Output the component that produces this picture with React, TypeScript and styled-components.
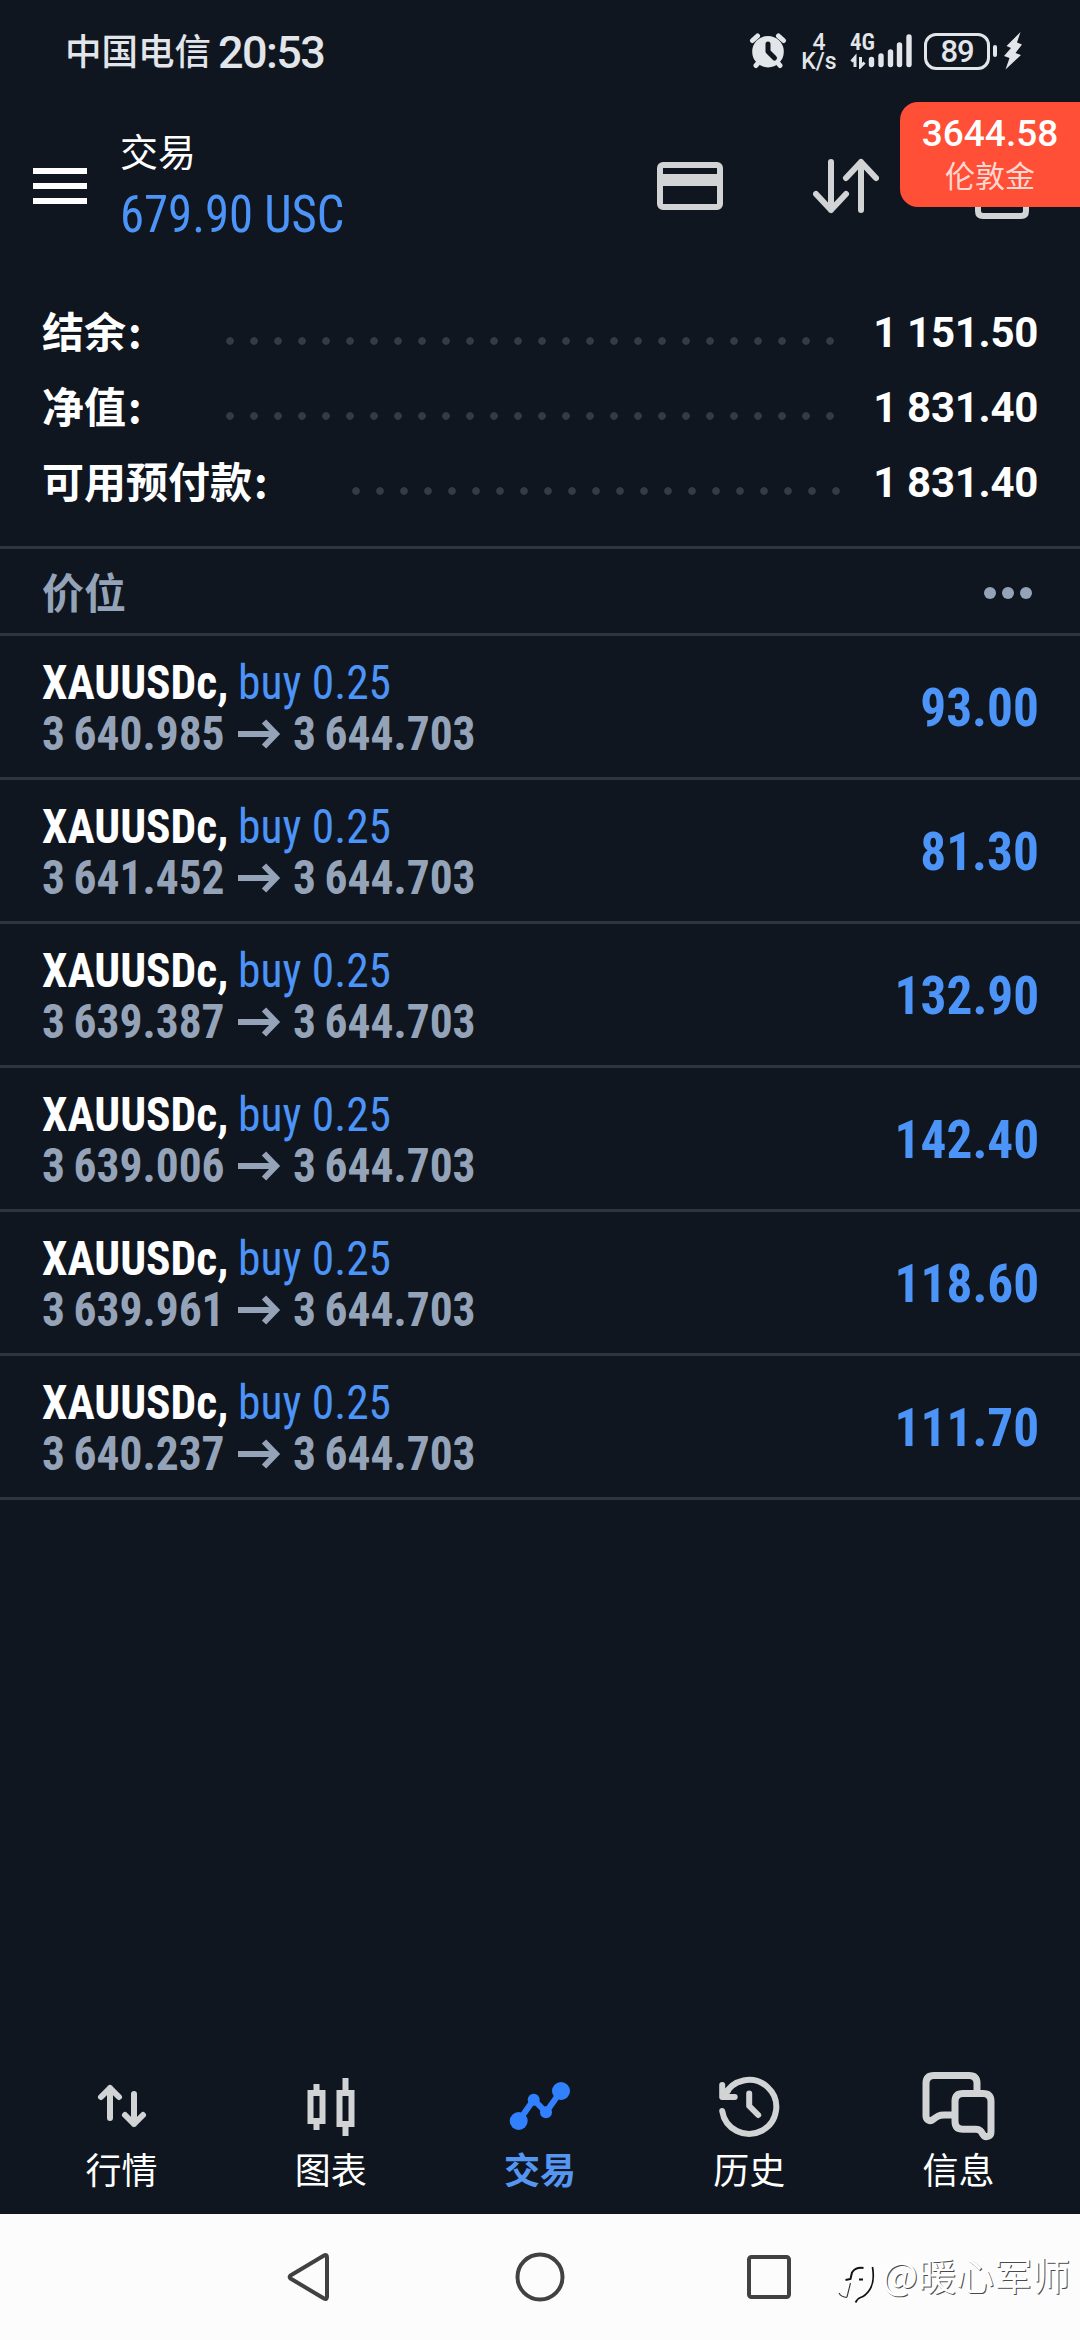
import React from "react";
import styled, { createGlobalStyle } from "styled-components";

const sans = `Roboto, "Noto Sans CJK SC", sans-serif`;
const condensed = `"Roboto Condensed", Roboto, sans-serif`;
const cjk = `"Noto Sans CJK SC", sans-serif`;

const color = {
  bg: "#0f161f",
  line: "#2d3640",
  blue: "#4c94f8",
  active: "#3080ff",
  muted: "#94a3b8",
  icon: "#d2d3d4",
  status: "#e2e5e9",
};

const GlobalStyle = createGlobalStyle`
  body { margin: 0; background: ${color.bg}; }
  * { box-sizing: border-box; }
  svg { display: block; flex: none; }
`;

const Screen = styled.div`
  position: relative;
  display: flex;
  flex-direction: column;
  width: 1080px;
  height: 2340px;
  overflow: hidden;
  background: ${color.bg};
  color: #fff;
  font-family: ${sans};
  white-space: nowrap;
`;

const StatusBar = styled.div`
  display: flex;
  align-items: center;
  height: 102px;
  padding: 0 57px 0 65px;
  color: ${color.status};
`;
const Carrier = styled.span`
  font: 500 36.5px/50px ${cjk};
  width: 153px;
  margin-top: -2px;
`;
const Clock = styled.span`
  font: 500 45px/50px ${sans};
  letter-spacing: -1.6px;
  margin-top: 3px;
`;
const StatusIcons = styled.div`
  display: flex;
  align-items: center;
  margin-left: auto;
`;
const NetSpeed = styled.div`
  display: flex;
  flex-direction: column;
  align-items: center;
  width: 34px;
  margin: 2px 13px 0 15px;
  font: 500 23px/19px ${sans};
`;
const Signal = styled.div`
  display: flex;
  position: relative;
  width: 64px;
  height: 36px;
`;
const NetType = styled.span`
  position: absolute;
  left: 1px;
  top: -1px;
  font: 600 23px/21px ${condensed};
`;
const Battery = styled.div`
  display: flex;
  align-items: center;
  justify-content: center;
  width: 66px;
  height: 37px;
  margin: 0 3px 0 11px;
  border: 3px solid ${color.status};
  border-radius: 12px;
  font: 500 31px/31px ${sans};
  letter-spacing: -1px;
`;
const BatteryTip = styled.div`
  width: 4px;
  height: 12px;
  margin-right: 7px;
  border-radius: 2px;
  background: ${color.status};
`;

const Header = styled.header`
  display: flex;
  align-items: center;
  height: 168px;
  padding: 0 45px 0 33px;
`;
const MenuButton = styled.div`
  display: flex;
  flex-direction: column;
  gap: 9px;
  width: 54px;
  margin-right: 33px;
`;
const MenuBar = styled.div`
  height: 6px;
  background: #fff;
`;
const HeaderText = styled.div`
  display: flex;
  flex-direction: column;
  gap: 5px;
  margin-top: -8px;
`;
const Title = styled.div`
  font: 400 38px/60px ${cjk};
`;
const Equity = styled.div`
  width: 230px;
  font: 400 51px/60px ${condensed};
  color: ${color.blue};
  transform: scaleX(0.955);
  transform-origin: left;
`;
const Actions = styled.div`
  display: flex;
  gap: 90px;
  margin-left: auto;
`;

const QuoteBadge = styled.div`
  position: absolute;
  right: 0;
  top: 102px;
  width: 180px;
  height: 105px;
  padding: 9px 0 0;
  border-radius: 18px 0 0 18px;
  background: #ff4f37;
  text-align: center;
`;
const QuotePrice = styled.div`
  font: 500 37px/46px ${sans};
`;
const QuoteName = styled.div`
  margin-top: -3px;
  font: 400 30px/40px ${cjk};
  color: #ffd8d2;
`;

const Summary = styled.section`
  display: flex;
  flex-direction: column;
  height: 276px;
  padding: 25px 42px 0;
`;
const SummaryRow = styled.div`
  display: flex;
  align-items: center;
  height: 75px;
`;
const SummaryLabel = styled.span`
  margin-top: -5px;
  font: 700 42px/60px ${cjk};
  &::after {
    content: ":";
    margin-left: 2px;
  }
`;
const Leader = styled.div<{ $count: number; $end: number }>`
  width: ${p => p.$count * 24}px;
  height: 8px;
  margin: 17px ${p => p.$end}px 0 auto;
  background: radial-gradient(circle at 12px 4px, #333c46 3.4px, transparent 4.2px) 0 0 / 24px 8px;
`;
const SummaryValue = styled.span`
  width: 166px;
  margin-top: 1px;
  text-align: right;
  font: 700 42px/60px ${sans};
  letter-spacing: -0.3px;
`;

const SectionHead = styled.div`
  display: flex;
  align-items: center;
  justify-content: space-between;
  height: 90px;
  padding: 0 48px 0 42px;
  border: solid ${color.line};
  border-width: 3px 0;
  color: ${color.muted};
  font: 700 42px/60px ${cjk};
`;
const SectionTitle = styled.span`
  margin-top: -1px;
`;
const More = styled.div`
  display: flex;
  gap: 6px;
  margin-top: 4px;
`;
const MoreDot = styled.i`
  width: 12px;
  height: 12px;
  border-radius: 50%;
  background: ${color.muted};
`;

const Position = styled.div`
  display: flex;
  justify-content: space-between;
  height: 144px;
  padding: 21px 41px 0 42px;
  border-bottom: 3px solid ${color.line};
`;
const Line = styled.div`
  display: flex;
  align-items: center;
  height: 51px;
  font: 700 48px/51px ${condensed};
`;
const Narrow = styled.span<{ $width: number }>`
  width: ${p => p.$width}px;
  transform: scaleX(0.947);
  transform-origin: left;
`;
const Symbol = styled(Narrow)``;
const Side = styled(Narrow)`
  font-weight: 400;
  color: ${color.blue};
`;
const Price = styled(Narrow)`
  color: ${color.muted};
  word-spacing: -2px;
`;
const ArrowSvg = styled.svg`
  margin: 1px 12px 0 12px;
`;
const Profit = styled.div`
  font: 700 54px/102px ${condensed};
  color: ${color.blue};
  transform: scaleX(0.95);
  transform-origin: right;
`;

const Spacer = styled.div`
  flex: 1;
`;

const Tabs = styled.nav`
  display: flex;
  height: 154px;
  padding: 10px 17px 0;
`;
const Tab = styled.div`
  display: flex;
  flex: 1;
  flex-direction: column;
  align-items: center;
`;
const TabLabel = styled.span<{ $active?: boolean }>`
  margin-top: -2px;
  font: ${p => (p.$active ? 700 : 400)} 36px/56px ${cjk};
  color: ${p => (p.$active ? "#5596f2" : "#fff")};
`;

const SystemNav = styled.div`
  position: relative;
  display: flex;
  align-items: center;
  justify-content: center;
  gap: 180px;
  height: 126px;
  background: #fcfcfc;
`;
const Watermark = styled.div`
  position: absolute;
  right: 10px;
  top: 32px;
  display: flex;
  align-items: flex-start;
  gap: 6px;
  color: #fff;
  font: 400 38px/56px ${cjk};
  text-shadow: 1px 1px 0 #4a4a4a;
`;
const LogoSvg = styled.svg`
  margin-top: 16px;
`;

const stroke6 = { fill: "none", stroke: color.icon, strokeWidth: 6, strokeLinecap: "round", strokeLinejoin: "round" } as const;
const navStroke = { fill: "none", stroke: "#414141", strokeWidth: 4, strokeLinejoin: "round" } as const;

const Alarm = () => (
  <svg width="38" height="38" viewBox="749 33 38 38" fill="none" stroke={color.status} strokeWidth="5" strokeLinecap="round">
    <circle cx="768" cy="52.7" r="15.8" fill={color.status} stroke="none" />
    <path d="M752.5 41.5l5-4.5M783.5 41.5l-5-4.5M756 66.5l4-5M780 66.5l-4-5" />
    <path d="M768 45v7.5l6.5 6.5" stroke={color.bg} strokeLinejoin="round" />
  </svg>
);

const SignalBars = () => (
  <svg width="64" height="36" viewBox="849 33 64 36" fill="none" stroke={color.status}>
    <path d="M871.5 59.500v5M881 56v8.500M890.500 52v12.500M899.500 45v19.500M909 37v27.500" strokeWidth="5.4" strokeLinecap="round" />
    <path d="M855 67v-9.500l-3.500 4M860.500 57v9.500l4-4" strokeWidth="3" />
  </svg>
);

const Bolt = () => (
  <svg width="19" height="38" viewBox="1003 32 19 38" fill={color.status}>
    <path d="M1019.500 32L1005.500 46l4.500 2-7 8 5.500 2-4 11.500L1020 55l-5.500-2 6.500-8.500-5-2z" />
  </svg>
);

const Card = () => (
  <svg width="66" height="66" viewBox="657 153 66 66">
    <rect x="660" y="165" width="60" height="42" rx="3" {...stroke6} />
    <path d="M660 174h60v12h-60z" fill={color.icon} />
  </svg>
);

const Sort = () => (
  <svg width="66" height="66" viewBox="813 153 66 66" {...stroke6}>
    <path d="M831 162v48M816 194l15 16 15-16M861 210v-48M846 178l15-16 15 16" />
  </svg>
);

const NewOrder = () => (
  <svg width="66" height="66" viewBox="969 153 66 66" {...stroke6}>
    <path d="M978 160h48v51q0 5-5 5h-38q-5 0-5-5z" />
  </svg>
);

const PriceArrow = () => (
  <ArrowSvg width="44" height="30" viewBox="0 0 44 30" fill="none" stroke={color.muted} strokeWidth="6">
    <path d="M1 15h38M27 2.500l12 12.500-12 12.500" />
  </ArrowSvg>
);

const QuotesIcon = () => (
  <svg width="72" height="72" viewBox="86 2070 72 72" {...stroke6}>
    <path d="M110 2118v-30M101 2097l9-9 9 9M134 2094v30M125 2115l9 9 9-9" />
  </svg>
);

const ChartIcon = () => (
  <svg width="72" height="72" viewBox="295 2070 72 72" fill="none" stroke={color.icon} strokeWidth="6">
    <path d="M310.500 2093h12v28h-12zM316.500 2084v7M316.500 2122v8M339.500 2093h12v31h-12zM345.500 2078v13M345.500 2126v10" />
  </svg>
);

const TradeIcon = () => (
  <svg width="72" height="72" viewBox="504 2070 72 72" fill={color.active}>
    <path d="M518.7 2121l15-21.300 12.300 12.600 15-21.300" fill="none" stroke={color.active} strokeWidth="6" />
    <circle cx="518.7" cy="2121" r="9" />
    <circle cx="561" cy="2091" r="9" />
    <circle cx="533.7" cy="2099.7" r="6" />
    <circle cx="546" cy="2112.3" r="6" />
  </svg>
);

const HistoryIcon = () => (
  <svg width="72" height="72" viewBox="712.5 2070 72 72" {...stroke6}>
    <path d="M721.7 2111a27.200 27 0 1 0 2-15M721.700 2085v12h12.500M722.500 2096l5-5" />
    <path d="M748.7 2093.500v12.500l9 9" />
  </svg>
);

const MessagesIcon = () => (
  <svg width="74" height="72" viewBox="920.5 2070 74 72" {...stroke6} strokeWidth="7" strokeLinecap="butt">
    <path d="M976.500 2092V2083.500q0-8-8-8H933.500q-8 0-8 8V2116c0 4 4 6 7 3.500c4-3 6-4.500 11-4.500H952" />
    <path d="M962.500 2093.500H982.500q8 0 8 8V2132c0 5-6 6-8 2.500c-2-3.500-3-5.300-7-5.300H962.500q-8 0-8-8V2101.500q0-8 8-8z" />
  </svg>
);

const Back = () => (
  <svg width="50" height="50" viewBox="285 2252 50 50" {...navStroke}>
    <path d="M290.500 2275.500L324 2255.500q3-1.500 3 2v39q0 3.500-3 2L290.500 2278.500q-1.500-1.500 0-3z" />
  </svg>
);

const Home = () => (
  <svg width="50" height="50" viewBox="0 0 50 50" {...navStroke}>
    <circle cx="25" cy="25" r="22.5" />
  </svg>
);

const Recents = () => (
  <svg width="50" height="50" viewBox="0 0 50 50" {...navStroke}>
    <rect x="4" y="5" width="40" height="40" rx="2.5" />
  </svg>
);

const WatermarkLogo = () => (
  <LogoSvg width="38" height="44" viewBox="840 2262 38 44" fill="none">
    <path d="M865.500 2268q-8-1-11.500 4.500l-1.500 6.500-5 1M861 2279.500h4" stroke="#111" strokeWidth="2" />
    <path d="M874.500 2267q2.500 15-3 23-4 6-9 7.500-3 1-5 5" stroke="#111" strokeWidth="1.7" />
    <path d="M852.500 2283l-3.500 14M841 2293q2 4 8 4.500" stroke="#333" strokeWidth="1.1" />
  </LogoSvg>
);

const summary = [
  { label: "结余", value: "1 151.50", dots: 26, end: 30 },
  { label: "净值", value: "1 831.40", dots: 26, end: 30 },
  { label: "可用预付款", value: "1 831.40", dots: 21, end: 24 },
];

const positions = [
  ["3 640.985", "93.00"],
  ["3 641.452", "81.30"],
  ["3 639.387", "132.90"],
  ["3 639.006", "142.40"],
  ["3 639.961", "118.60"],
  ["3 640.237", "111.70"],
];

const tabs = [
  { label: "行情", Icon: QuotesIcon },
  { label: "图表", Icon: ChartIcon },
  { label: "交易", Icon: TradeIcon, active: true },
  { label: "历史", Icon: HistoryIcon },
  { label: "信息", Icon: MessagesIcon },
];

export default function App() {
  return (
    <Screen>
      <GlobalStyle />
      <StatusBar>
        <Carrier>中国电信</Carrier>
        <Clock>20:53</Clock>
        <StatusIcons>
          <Alarm />
          <NetSpeed>
            <span>4</span>
            <span>K/s</span>
          </NetSpeed>
          <Signal>
            <NetType>4G</NetType>
            <SignalBars />
          </Signal>
          <Battery>89</Battery>
          <BatteryTip />
          <Bolt />
        </StatusIcons>
      </StatusBar>

      <Header>
        <MenuButton>
          <MenuBar />
          <MenuBar />
          <MenuBar />
        </MenuButton>
        <HeaderText>
          <Title>交易</Title>
          <Equity>679.90 USC</Equity>
        </HeaderText>
        <Actions>
          <Card />
          <Sort />
          <NewOrder />
        </Actions>
      </Header>

      <Summary>
        {summary.map(row => (
          <SummaryRow key={row.label}>
            <SummaryLabel>{row.label}</SummaryLabel>
            <Leader $count={row.dots} $end={row.end} />
            <SummaryValue>{row.value}</SummaryValue>
          </SummaryRow>
        ))}
      </Summary>

      <SectionHead>
        <SectionTitle>价位</SectionTitle>
        <More>
          <MoreDot />
          <MoreDot />
          <MoreDot />
        </More>
      </SectionHead>

      {positions.map(([open, profit]) => (
        <Position key={open}>
          <div>
            <Line>
              <Symbol $width={196}>XAUUSDc,</Symbol>
              <Side $width={160}>buy 0.25</Side>
            </Line>
            <Line>
              <Price $width={183}>{open}</Price>
              <PriceArrow />
              <Price $width={183}>3 644.703</Price>
            </Line>
          </div>
          <Profit>{profit}</Profit>
        </Position>
      ))}

      <Spacer />

      <Tabs>
        {tabs.map(({ label, Icon, active }) => (
          <Tab key={label}>
            <Icon />
            <TabLabel $active={active}>{label}</TabLabel>
          </Tab>
        ))}
      </Tabs>

      <SystemNav>
        <Back />
        <Home />
        <Recents />
        <Watermark>
          <WatermarkLogo />
          @暖心军师
        </Watermark>
      </SystemNav>

      <QuoteBadge>
        <QuotePrice>3644.58</QuotePrice>
        <QuoteName>伦敦金</QuoteName>
      </QuoteBadge>
    </Screen>
  );
}
